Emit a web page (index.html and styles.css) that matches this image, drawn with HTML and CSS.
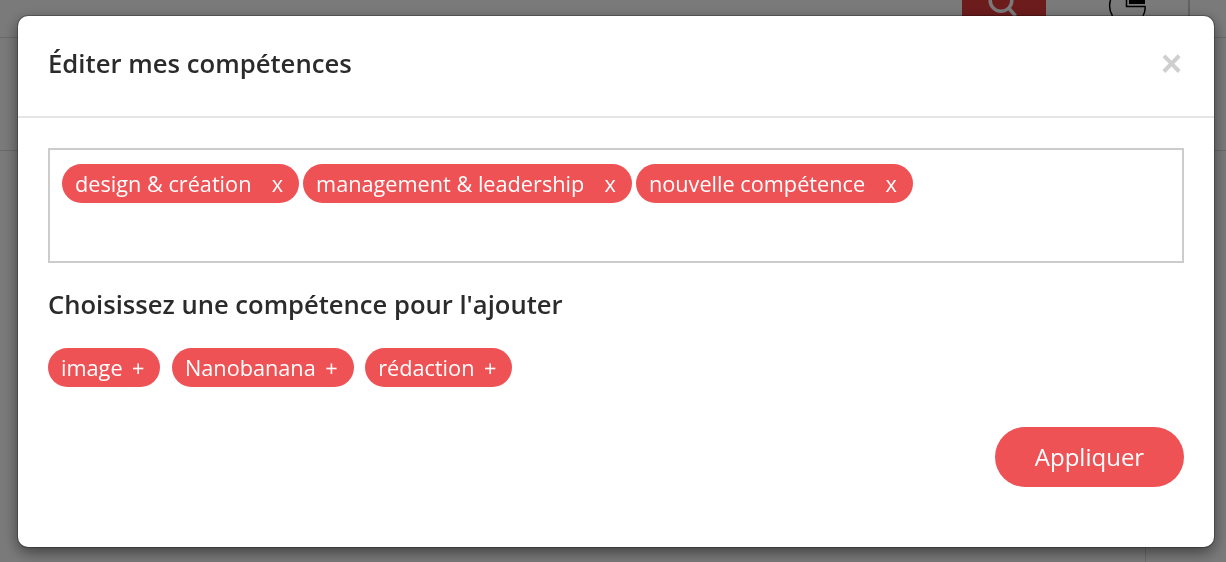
FILE: index.html
```html
<!DOCTYPE html>
<html lang="fr">
<head>
<meta charset="utf-8">
<title>Éditer mes compétences</title>
<link rel="stylesheet" href="styles.css">
</head>
<body>
<div class="page">
  <header class="topbar">
    <div class="search-btn">
      <svg class="search-icon" width="40" height="37" viewBox="0 0 40 37"><circle cx="17" cy="0.5" r="10.8"/><path d="M24.6 8l7 8"/></svg>
    </div>
    <div class="cart">
      <svg width="44" height="37" viewBox="0 0 44 37"><path class="cart-line" d="M2.5 0C1 5 1.500 11 4.500 16M18.500 0V6.500H37C37.500 10 36.500 13 35 16"/><rect class="cart-box" x="21" y="0" width="16" height="4"/></svg>
    </div>
    <div class="top-end"></div>
  </header>
  <div class="subbar"></div>
  <div class="content">
    <div class="content-col"></div>
  </div>
</div>
<div class="backdrop"></div>
<section class="modal">
  <div class="modal-head">
    <h2 class="modal-title">Éditer mes compétences</h2>
    <span class="close">×</span>
  </div>
  <div class="modal-body">
    <div class="tag-box">
      <span class="chip">design &amp; création<b class="chip-x">x</b></span>
      <span class="chip">management &amp; leadership<b class="chip-x">x</b></span>
      <span class="chip">nouvelle compétence<b class="chip-x">x</b></span>
    </div>
    <h3 class="pick-title">Choisissez une compétence pour l'ajouter</h3>
    <div class="pick-list">
      <span class="chip">image<b class="chip-plus">+</b></span>
      <span class="chip">Nanobanana<b class="chip-plus">+</b></span>
      <span class="chip">rédaction<b class="chip-plus">+</b></span>
    </div>
    <div class="actions"><button class="apply">Appliquer</button></div>
  </div>
</section>
</body>
</html>
```
FILE: styles.css
```css
* { box-sizing: border-box; }
html, body { margin: 0; height: 100%; overflow: hidden; background: #fff; }
body { font-family: "Open Sans", "Noto Sans", sans-serif; color: #2b2b2b; }

.page { height: 562px; display: flex; flex-direction: column; }
.topbar { height: 38px; border-bottom: 1px solid #ddd; display: flex; justify-content: flex-end; }
.search-btn { width: 84px; height: 37px; background: #e33b3b; margin-right: 62px; overflow: hidden; display: flex; justify-content: center; }
.search-icon { fill: none; stroke: #fff; stroke-width: 3.5; }
.cart { width: 44px; height: 37px; margin-right: 36px; }
.cart-line { fill: none; stroke: #000; stroke-width: 1.5; }
.cart-box { fill: #000; }
.top-end { width: 38px; border-left: 2px solid #ccc; }
.subbar { height: 113px; border-bottom: 1px solid #ddd; }
.content { flex: 1; display: flex; justify-content: flex-end; }
.content-col { width: 81px; border-left: 1px solid #ddd; }

.backdrop { position: fixed; inset: 0; background: rgba(0, 0, 0, .52); }
.modal {
  position: fixed; left: 18px; top: 16px; width: 1196px; height: 531px;
  background: #fff; border-radius: 10px;
  box-shadow: 0 0 0 1px rgba(0,0,0,.25), 0 5px 15px rgba(0,0,0,.5);
  display: flex; flex-direction: column;
}
.modal-head { height: 102px; border-bottom: 2px solid #e5e5e5; padding: 0 30px 4px; display: flex; justify-content: space-between; align-items: center; }
.modal-title { margin: 0; font-size: 25.7px; font-weight: 600; line-height: 32px; color: #2b2b2b; }
.close { font-size: 36px; font-weight: 700; line-height: 32px; color: #cfcfcf; font-family: "Liberation Sans", sans-serif; margin-right: 2px; }
.modal-body { padding: 30px 30px 0; flex: 1; display: flex; flex-direction: column; }
.tag-box { height: 115px; border: 2px solid #ccc; padding: 14px 12px; display: flex; align-items: flex-start; gap: 4px; }
.chip { height: 39px; border-radius: 20px; background: #ee5255; color: #fff; font-size: 21.7px; font-weight: 500; padding: 0 13px; display: inline-flex; align-items: center; line-height: 1; white-space: nowrap; }
.chip-x { font-weight: 500; margin-left: 20.300px; margin-right: 3px; }
.chip-plus { font-weight: 500; margin-left: 9.500px; margin-right: 3px; }
.pick-title { margin: 26px 0 0; font-size: 25.6px; font-weight: 600; line-height: 32px; color: #2b2b2b; }
.pick-list { display: flex; gap: 11.500px; margin-top: 27px; }
.actions { display: flex; justify-content: flex-end; margin-top: 40px; }
.apply { width: 189px; height: 60px; border: 0; border-radius: 30px; background: #ee5255; color: #fff; font: 400 24px/56px "Open Sans", sans-serif; padding: 0 0 1px; }
```
